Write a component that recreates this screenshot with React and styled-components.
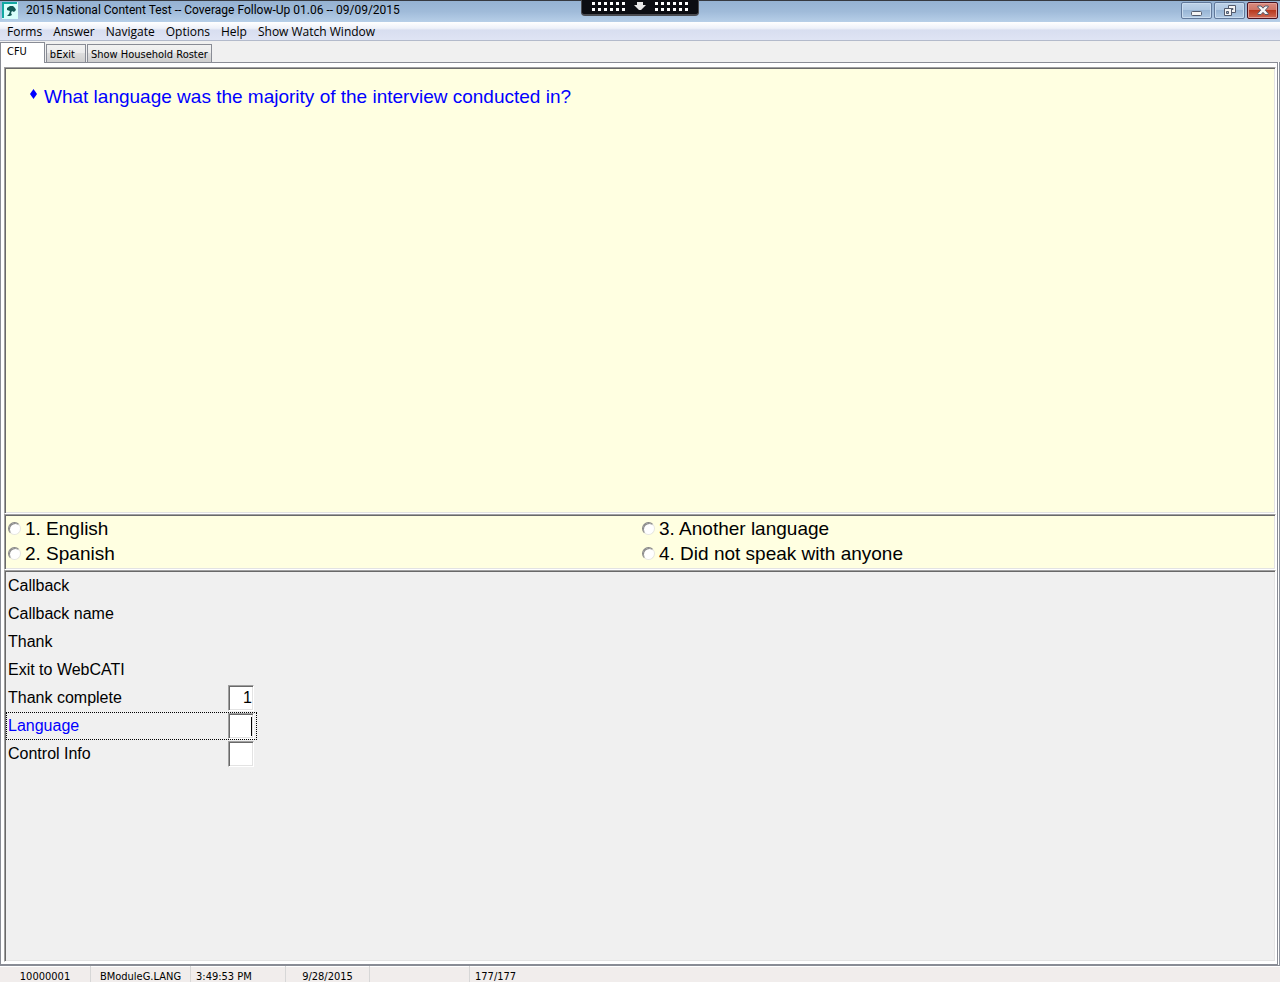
import React, { useState } from 'react'
import styled, { createGlobalStyle, css } from 'styled-components'

const GlobalStyle = createGlobalStyle`
  * {
    box-sizing: border-box;
  }

  body {
    margin: 0;
    background: #f0f0f0;
    color: #000;
    font-family: 'Liberation Sans', Arial, sans-serif;
  }
`

const sunken = css`
  border: 1px solid;
  border-color: #a0a0a0 #fff #fff #a0a0a0;
  box-shadow: inset 1px 1px 0 #696969, inset -1px -1px 0 #e3e3e3;
`

const Window = styled.div`
  display: flex;
  flex-direction: column;
  min-height: 100vh;
`

const TitleBar = styled.header`
  position: relative;
  display: flex;
  align-items: center;
  height: 22px;
  padding: 0 2px 2px;
  border-top: 1px solid #36393f;
  background: linear-gradient(#95b2d2, #a0bbd9 50%, #b7cfe8);
`

const Title = styled.h1`
  flex: 1;
  margin: 0 0 0 8px;
  font-family: Roboto, 'Open Sans', sans-serif;
  font-size: 12px;
  font-weight: normal;
  line-height: 19px;
`

const WindowButtons = styled.div`
  display: flex;
  align-self: flex-start;
  gap: 2px;
  padding-top: 1px;
`

const WindowButton = styled.button`
  display: flex;
  align-items: center;
  justify-content: center;
  width: 31px;
  height: 17px;
  padding: 0;
  border: 1px solid ${({ $close }) => ($close ? '#4b1220' : '#61789a')};
  border-radius: 2px;
  box-shadow: inset 0 0 0 1px ${({ $close }) => ($close ? '#e3a198' : '#c9dcef')};
  background: ${({ $close }) =>
    $close
      ? 'linear-gradient(#d98b7f, #cf7466 45%, #b8391f 50%, #cf6a55)'
      : 'linear-gradient(#bdd2e8, #b0c8e2 45%, #98b5d5 50%, #b1cae4)'};
`

const RemoteBar = styled.div`
  position: absolute;
  top: -1px;
  left: 50%;
  width: 118px;
  height: 16px;
  transform: translateX(-50%);
  border: solid #4a4b50;
  border-width: 0 1px 2px;
  border-radius: 0 0 4px 4px;
  background: #0c0d12;

  svg {
    display: block;
  }
`

const MenuBar = styled.nav`
  display: flex;
  gap: 11px;
  height: 19px;
  padding: 0 7px;
  border-bottom: 1px solid #b3bacb;
  background: linear-gradient(#fff, #eef1f9 35%, #d8def0 45%, #dfe4f4);
`

const MenuLink = styled.a`
  color: #000;
  font-family: 'Open Sans', 'Noto Sans', sans-serif;
  font-size: 12px;
  line-height: 20px;
  text-decoration: none;
`

const Tabs = styled.div`
  display: flex;
  align-items: flex-end;
  gap: 1px;
  height: 21px;
`

const Tab = styled.button`
  height: 18px;
  padding: 1px 3px 0;
  border: 1px solid #898c95;
  border-bottom: 0;
  background: linear-gradient(#f2f2f2, #ebebeb 50%, #dddddd 50%, #cfcfcf);
  color: #000;
  font-family: 'DejaVu Sans Condensed', 'DejaVu Sans', sans-serif;
  font-size: 11px;
  line-height: 18px;
  text-align: left;

  ${({ $wide }) => $wide && css`
    padding-right: 10px;
  `}

  ${({ $active }) => $active && css`
    z-index: 1;
    height: 21px;
    margin-bottom: -1px;
    padding: 0 17px 2px 6px;
    background: #fff;
  `}
`

const Workspace = styled.main`
  display: flex;
  flex: 1;
  padding-right: 1px;
  border-right: 1px solid #8f949e;
  background: #fff;
`

const Page = styled.div`
  display: grid;
  flex: 1;
  grid-template-rows: 8fr auto 7fr;
  padding: 4px 1px 2px 3px;
  border: 1px solid #898c95;
  background: #fff;
`

const Panel = styled.section`
  ${sunken}
  padding: 1px;
  background: ${({ $plain }) => ($plain ? '#f0f0f0' : '#ffffe1')};
`

const Question = styled.h2`
  display: flex;
  gap: 6px;
  margin: 0;
  padding: 16px 23px;
  color: #0000ff;
  font-size: 19px;
  font-weight: normal;
  line-height: 24px;

  svg {
    margin-top: 3px;
  }
`

const Answers = styled.div`
  display: grid;
  grid-auto-flow: column;
  grid-template-columns: 1fr 1fr;
  grid-template-rows: 25px 25px;
  padding-bottom: 2px;
`

const Answer = styled.label`
  display: flex;
  align-items: center;
  gap: 4px;
  padding-left: 2px;
  font-size: 19px;
  line-height: 25px;
`

const Radio = styled.input`
  width: 13px;
  height: 13px;
  margin: 0;
  appearance: none;
  border: 1px solid;
  border-color: #858585 #e6e6e0 #e6e6e0 #858585;
  border-radius: 50%;
  box-shadow: inset 1px 1px 0 #8c8c8c;
  background: #fff;

  &:checked {
    background: radial-gradient(#000 2px, #fff 3px);
  }
`

const Field = styled.div`
  display: flex;
  align-items: center;
  justify-content: space-between;
  width: 251px;
  height: 28px;
  padding: 0 3px 0 2px;
  color: ${({ $current }) => ($current ? '#0000ff' : '#000')};
  font-size: 16px;
  outline: ${({ $current }) => ($current ? '1px dotted #000' : 'none')};
  outline-offset: -1px;
`

const FieldInput = styled.input`
  ${sunken}
  width: 26px;
  height: 26px;
  padding: 0 1px;
  border-radius: 0;
  outline: none;
  background: #fff;
  color: #000;
  font-family: inherit;
  font-size: 16px;
  text-align: right;

  ${({ $current }) => $current && css`
    background: linear-gradient(#000, #000) no-repeat right 1px center / 1px 19px #fff;
  `}
`

const StatusBar = styled.footer`
  display: flex;
  height: 17px;
  border-top: 1px solid #898c95;
  background: #f1edec;
  box-shadow: inset 0 1px 0 #fff;
`

const StatusCell = styled.div`
  width: ${({ $width }) => $width}px;
  overflow: hidden;
  padding: 0 5px;
  border-right: ${({ $last }) => ($last ? 'none' : '1px solid #d7d7d7')};
  font-family: 'DejaVu Sans Condensed', 'DejaVu Sans', sans-serif;
  font-size: 11px;
  line-height: 21px;
  text-align: ${({ $center }) => ($center ? 'center' : 'left')};
  white-space: nowrap;
`

const menus = ['Forms', 'Answer', 'Navigate', 'Options', 'Help', 'Show Watch Window']

const answers = [
  '1. English',
  '2. Spanish',
  '3. Another language',
  '4. Did not speak with anyone',
]

const fields = [
  { name: 'Callback' },
  { name: 'Callback name' },
  { name: 'Thank' },
  { name: 'Exit to WebCATI' },
  { name: 'Thank complete', value: '1' },
  { name: 'Language', value: '', current: true },
  { name: 'Control Info', value: '' },
]

const dots = [0, 1, 2, 3, 4, 5]

const AppIcon = () => (
  <svg width="16" height="17" viewBox="0 0 16 17" aria-hidden="true">
    <path d="M0 0h16v17H0z" fill="#d9fffb" />
    <path d="M0 0h15v2H2v14H0z" fill="#12a9a3" />
    <path d="M5 6l3-2h3l2 2 1 2-2 2-2-1-1 2 1 2-2 1H5l2-2 1-3-3-1z" fill="#145a56" />
  </svg>
)

const RemoteGrip = () => (
  <svg width="116" height="14" viewBox="0 0 116 14" aria-hidden="true">
    {dots.map((i) => (
      <path
        key={i}
        d={`M${10 + i * 6} 2h3v3h-3zM${10 + i * 6} 8h3v3h-3zM${73 + i * 6} 2h3v3h-3zM${73 + i * 6} 8h3v3h-3z`}
        fill="#fff"
      />
    ))}
    <path d="M55 2h6v3h3l-5 5h-2l-5-5h3z" fill="#e8e8e8" />
  </svg>
)

const MinimizeIcon = () => (
  <svg width="12" height="12" viewBox="0 0 12 12" aria-hidden="true">
    <rect x="0.5" y="6.5" width="10" height="4" rx="1" fill="#f4f4f4" stroke="#535b6d" />
  </svg>
)

const RestoreIcon = () => (
  <svg width="12" height="12" viewBox="0 0 12 12" aria-hidden="true">
    <path d="M4.500.5h7v7h-7z" fill="#f4f4f4" stroke="#535b6d" />
    <path d="M7.500 3.500h1.500v1h-1.500z" fill="#9db7d3" stroke="#535b6d" />
    <path d="M.5 3.500h7v7h-7z" fill="#f4f4f4" stroke="#535b6d" />
    <path d="M2.500 6.500h2v2h-2z" fill="#9db7d3" stroke="#535b6d" />
  </svg>
)

const CloseIcon = () => (
  <svg width="12" height="11" viewBox="0 0 12 11" aria-hidden="true">
    <path
      d="M.8 1h3.200L6 3.200 8 1h3.200v1L8.300 5.200l2.900 3.300v1H8L6 7.300 4 9.500H.8v-1l2.900-3.300L.8 2z"
      fill="#f6f6f6"
      stroke="#535b6d"
    />
  </svg>
)

const Diamond = () => (
  <svg width="9" height="12" viewBox="0 0 9 12" aria-hidden="true">
    <path d="M4.500 1L8 6l-3.500 5L1 6z" fill="#0000ff" />
  </svg>
)

const App = () => {
  const [answer, setAnswer] = useState('')

  return (
    <Window>
      <GlobalStyle />
      <TitleBar>
        <AppIcon />
        <Title>2015 National Content Test -- Coverage Follow-Up 01.06 -- 09/09/2015</Title>
        <RemoteBar>
          <RemoteGrip />
        </RemoteBar>
        <WindowButtons>
          <WindowButton type="button" aria-label="Minimize">
            <MinimizeIcon />
          </WindowButton>
          <WindowButton type="button" aria-label="Restore">
            <RestoreIcon />
          </WindowButton>
          <WindowButton type="button" aria-label="Close" $close>
            <CloseIcon />
          </WindowButton>
        </WindowButtons>
      </TitleBar>
      <MenuBar>
        {menus.map((menu) => (
          <MenuLink key={menu} href="#">{menu}</MenuLink>
        ))}
      </MenuBar>
      <Tabs role="tablist">
        <Tab type="button" role="tab" aria-selected="true" $active>CFU</Tab>
        <Tab type="button" role="tab" aria-selected="false" $wide>bExit</Tab>
        <Tab type="button" role="tab" aria-selected="false">Show Household Roster</Tab>
      </Tabs>
      <Workspace>
        <Page>
          <Panel>
            <Question>
              <Diamond />
              What language was the majority of the interview conducted in?
            </Question>
          </Panel>
          <Panel>
            <Answers role="radiogroup" aria-label="Language">
              {answers.map((text) => (
                <Answer key={text}>
                  <Radio
                    type="radio"
                    name="answer"
                    checked={answer === text}
                    onChange={() => setAnswer(text)}
                  />
                  {text}
                </Answer>
              ))}
            </Answers>
          </Panel>
          <Panel $plain>
            {fields.map(({ name, value, current }) => (
              <Field key={name} $current={current}>
                {value === undefined ? (
                  <span>{name}</span>
                ) : (
                  <>
                    <label htmlFor={name}>{name}</label>
                    <FieldInput id={name} type="text" defaultValue={value} $current={current} />
                  </>
                )}
              </Field>
            ))}
          </Panel>
        </Page>
      </Workspace>
      <StatusBar>
        <StatusCell $width={91} $center>10000001</StatusCell>
        <StatusCell $width={100} $center>BModuleG.LANG</StatusCell>
        <StatusCell $width={95}>3:49:53 PM</StatusCell>
        <StatusCell $width={84} $center>9/28/2015</StatusCell>
        <StatusCell $width={100} />
        <StatusCell $width={100} $last>177/177</StatusCell>
      </StatusBar>
    </Window>
  )
}

export default App
